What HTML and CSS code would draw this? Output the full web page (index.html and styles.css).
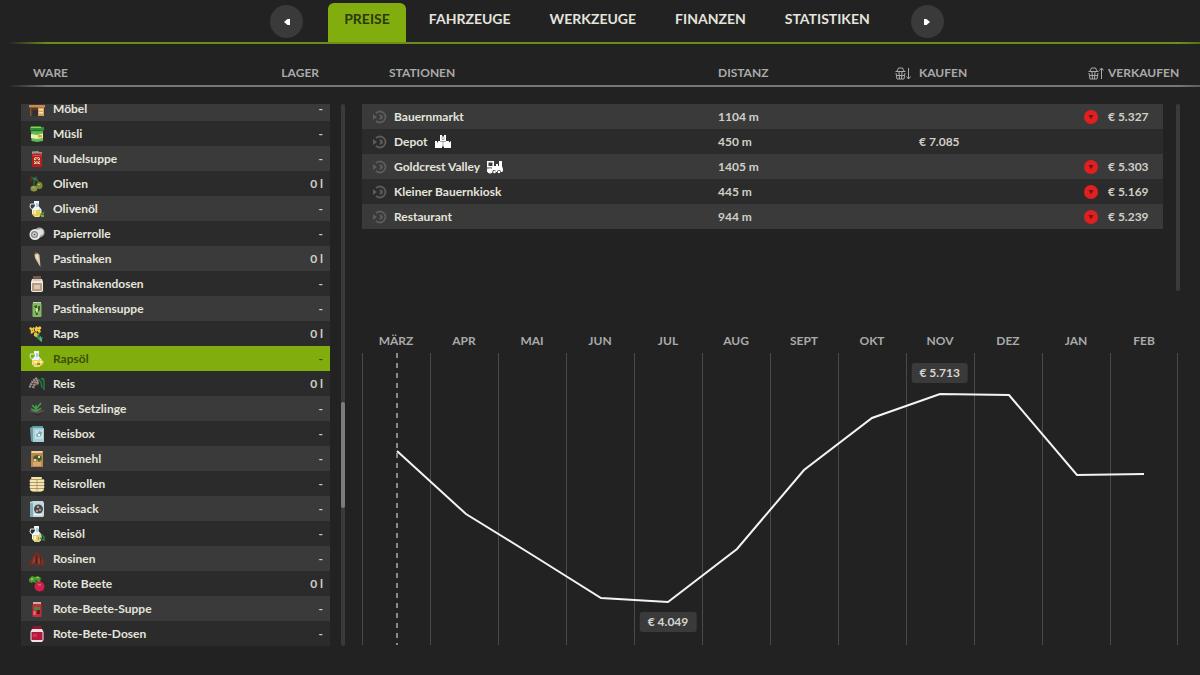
FILE: index.html
```html
<!DOCTYPE html>
<html lang="de">
<head>
    <meta charset="utf-8">
    <title>Preise</title>
    <link rel="stylesheet" href="styles.css">
</head>
<body>
    <svg class="sprite" aria-hidden="true">
        <symbol id="desk" viewBox="0 0 16 16">
            <path fill="#c98a50" d="M0 4h16v2.500H0z"/><path fill="#8b552b" d="M1 6.500h1.500V15H1zM13.500 6.500H15V15h-1.500z"/>
            <path fill="#5d3a20" d="M2.500 7H9v6H2.500z"/><path fill="#d9a066" d="M9 6.500h6V15H9z"/><path fill="#fbe3b8" d="M10 8h4v1.500h-4zM10 11h4v1.500h-4z"/>
            <path fill="#303030" d="M3.500 9H9v6H3.500z"/>
        </symbol>
        <symbol id="muesli" viewBox="0 0 16 16">
            <path fill="#2f8f3a" d="M1 1h14v3.500H1z"/><path fill="#7ed957" d="M2 .5h10v1.500H2z"/><path fill="#5fbb50" d="M2 4.500h12V15l-6 1-5.500-1z"/>
            <path fill="#f0edb0" d="M2 8l6 1 6-1.500V12l-6 1-6-1z"/><path fill="#d3a84c" d="M9 9h4v2.500H9z"/><path fill="#1f6a2b" d="M1.500 4.200h12v1h-12z"/>
        </symbol>
        <symbol id="noodle" viewBox="0 0 16 16">
            <path fill="#9a9a9a" d="M3 .5l6-.5 1 1 3 .3V4H3z"/><rect x="3" y="2.500" width="10" height="13.500" rx="1.500" fill="#bb1d20"/>
            <path fill="#e9c9a0" d="M5 6h6v7H5z"/><path stroke="#8e2d1b" d="M5 6l6 6M11 6l-6 6M8 6v7M5 9.500h6" stroke-width=".8"/><path fill="#e84a45" d="M4 4h8v1H4z"/>
        </symbol>
        <symbol id="olive" viewBox="0 0 16 16">
            <path stroke="#7b2a25" d="M2 0v6M2 1l5 1" fill="none"/><path fill="#1f7a50" d="M3 1l2 1 3-2-1 2 2 1-3 2-2-1z"/>
            <ellipse cx="5" cy="12.500" rx="3.500" ry="3" fill="#8a9642"/><ellipse cx="10.500" cy="9.500" rx="3" ry="3.500" fill="#7d8a37"/>
            <path fill="#b6bd68" d="M3.500 11h2v1h-2zM9 8h2v1H9z"/><path stroke="#4c7a30" d="M5 9V5M10 6L7 4" fill="none"/>
        </symbol>
        <symbol id="bottle" viewBox="0 0 16 16">
            <path fill="#eef6fa" d="M5 0h5v2L9.500 5l3 3.500v5L10 16H6l-3-3V8l3-3L5 2z"/><path fill="#a9cfe2" d="M7 2h2v4H7zM10 7l1.500 2v2H10z"/>
            <path fill="none" stroke="#dfeef5" d="M5 3H1.500L1 6l2 2.500"/>
        </symbol>
        <symbol id="oliveoil" viewBox="0 0 16 16">
            <use href="#bottle"/><path fill="#e8cf4b" d="M4 9h7v5.500l-1.500 1h-4L4 14z"/><path fill="#f8efa0" d="M5 9h2v4H5z"/>
            <path fill="#5d8c25" d="M11 12.500l4.500-2-1 3.500-3 1z"/><path fill="#87a83a" d="M12 14h3v2h-3z"/>
        </symbol>
        <symbol id="paper" viewBox="0 0 16 16">
            <circle cx="10.500" cy="6.500" r="5" fill="#a9a9a9"/><circle cx="11.500" cy="6" r="3" fill="#dedede"/><circle cx="6" cy="8.500" r="5.500" fill="#e6e6e6"/>
            <circle cx="5.500" cy="8.500" r="3.500" fill="#858585"/><circle cx="5.500" cy="8.500" r="2.200" fill="#cfcfcf"/><circle cx="5.500" cy="8.500" r=".8" fill="#444"/>
        </symbol>
        <symbol id="parsnip" viewBox="0 0 16 16">
            <path fill="#d8c2a2" d="M5.500 3l3-1 2 2 .5 6 .5 6-2-3L6 7z"/><path fill="#f3e5cd" d="M6.500 4h2l1.500 7-2.500-4z"/><path fill="#72633f" d="M6 1h1.500v2H6z"/>
        </symbol>
        <symbol id="parsnipjar" viewBox="0 0 16 16">
            <path fill="#765b49" d="M4 0h8v3H4z"/><path fill="#efe9df" d="M3 3h10l1 3v9l-1.500 1h-9L2 15V6z"/><path fill="#b89b82" d="M3 7h10v8H3z"/><path fill="#d8c8b5" d="M5 9h6v4H5z"/><path fill="#b5a79a" d="M4 3.500h8v1H4z"/>
        </symbol>
        <symbol id="parsnipsoup" viewBox="0 0 16 16">
            <path fill="#ccd7bd" d="M4 1h8v2H4z"/><rect x="3.500" y="2" width="9" height="14" rx="1" fill="#86b860"/><path fill="#345e2c" d="M5 5l3-1v3H6zM9 5h2v4l-2 2zM6 10h2l1 4H7z"/><path fill="#d8e4b0" d="M7 7l2 1-1 4-1-1z"/>
        </symbol>
        <symbol id="canola" viewBox="0 0 16 16">
            <path fill="none" stroke="#3f9957" stroke-width="1.500" d="M5 9l4 3 2 2M10 7l-1 4"/><path fill="#efc43f" d="M0 2l2-1 1 1.500L4.500 1 6 2 5 4l1 2-2 .5L3 8 1.500 7 2 5z"/>
            <path fill="#f3cc4a" d="M6 2l1.500-2L9 1.500 11 0l1.500 2L11 4l1 2-2 1-1.500-2L7 6 6 4.500z"/><path fill="#a87c1c" d="M3 4h1v1H3zM8.500 3h1v1h-1z"/>
            <path fill="#e5c13a" d="M5 7l2-1 2 2-1 3-3-1z"/><path fill="#49b877" d="M10 11l2-1v2l2-1-1 2v3l-2-1z"/>
        </symbol>
        <symbol id="canolaoil" viewBox="0 0 16 16">
            <use href="#bottle"/><path fill="#ecd463" d="M3 9h10l2 2-2 3-4 2-5-1z"/><path fill="#fff3a5" d="M5 10h3v2H5zM11 10h2v2h-2z"/><path fill="#a48a24" d="M8 12h3v2H8z"/>
        </symbol>
        <symbol id="rice" viewBox="0 0 16 16">
            <path fill="none" stroke="#287a43" stroke-width="1.500" d="M9 3l3 3 1 6M12 2l3 3v9M14 2l1 3"/>
            <path fill="none" stroke="#a58c84" stroke-width="2.500" stroke-dasharray="2 .6" d="M8 2L4 5l-4 7M9 4L6 7l-2 5M9 6L8 9"/>
        </symbol>
        <symbol id="seedling" viewBox="0 0 16 16">
            <path fill="#5b4b4a" d="M0 11l7-4 9 3-7 5z"/><path fill="#2e2a2a" d="M0 11l9 4 7-5-7 3z"/><path fill="none" stroke="#3fa34a" stroke-width="1.500" d="M7 11V4M7 8L3 4M7 8l5-6M8 10l4-3M6 10L2 8"/>
        </symbol>
        <symbol id="ricebox" viewBox="0 0 16 16">
            <path fill="#5b9fa9" d="M1 2l3-2h10v2l-9 1z"/><path fill="#a5cfd6" d="M4 2h11v14H4z"/><path fill="#6e9ca5" d="M1 2h3v14l-2-1z"/><path fill="#c4e2e6" d="M6 4h8v9H6z"/><path fill="#7fa6aa" d="M7 10l1-3 1 1 1-3 3 1-1 4-3 1z"/><path fill="#eff8f8" d="M9 8h2v2H9z"/>
        </symbol>
        <symbol id="flour" viewBox="0 0 16 16">
            <path fill="#bd8550" d="M2 1h12v15H2z"/><path fill="#f0d19a" d="M2 0h12l-1 2H3z"/><path fill="#d9a871" d="M4 11h8v4H4z"/><path fill="#3c6229" d="M4 6l3-2 5 1 1 3-3 3-2-3-3 2z"/><path fill="#e9d9a5" d="M5 8h2v2H5zM9 5h2v2H9z"/>
        </symbol>
        <symbol id="rolls" viewBox="0 0 16 16">
            <path fill="#b49d63" d="M1 3h14v11l-3 2H4l-3-2z"/>
            <path fill="none" stroke="#f3e5b6" stroke-width="2" stroke-linecap="round" d="M3 2h9M1.500 5h13M1.500 8h13M1.500 11h13M2.500 14h11"/><path stroke="#8d7b4c" d="M8 4v11" stroke-width=".6"/>
        </symbol>
        <symbol id="ricesack" viewBox="0 0 16 16">
            <path fill="#c0dbe2" d="M1 1l3-1h10l1 2v13l-1 1H1z"/><path fill="#82adb8" d="M1 2h3v14H1z"/><circle cx="9.500" cy="8" r="4.500" fill="#4d4546"/><path fill="#b59b91" d="M8 5h2v2H8zM10 8h2v2h-2zM7 9h2v2H7z"/><path fill="#eff8fa" d="M5 13h8v1H5z"/>
        </symbol>
        <symbol id="riceoil" viewBox="0 0 16 16">
            <use href="#bottle"/><path fill="#e3cf73" d="M4 9h8v5.500L9 16H6l-2-2z"/><path fill="#fbf3bf" d="M5 10h2v4H5z"/><path fill="#a3995b" d="M9 11h1v3H9z"/><path fill="none" stroke="#2f8141" stroke-width="1.500" d="M12 8l3 3v4M11 12l3 2"/>
        </symbol>
        <symbol id="raisin" viewBox="0 0 16 16">
            <path fill="#6d2c24" d="M5 3l3-3 2 3 3 2 3 6-1 4-4-1-3 1-4-1-4 1 1-5z"/><path fill="#8d4236" d="M4 8l2-3v6l-3 2zM9 6l2 2v5H9zM12 8l2 3v2z"/><path fill="#43201c" d="M7 5h1v8H7zM11 6h1v7z"/>
        </symbol>
        <symbol id="beet" viewBox="0 0 16 16">
            <path fill="#4f9c2e" d="M0 3l3-3 3 1 3-1 3 2-1 4-4 1-3-1-2 1-2-2z"/><path fill="#8acb4d" d="M2 2h2v2H2zM7 1h3v1H7z"/><path fill="#1f6b2f" d="M6 4h2l1 4H7z"/>
            <circle cx="10.500" cy="10.500" r="5" fill="#d11f4e"/><path fill="#f0567a" d="M9 8h3v1.500H9z"/><path stroke="#a51238" d="M13 14l2 2"/>
        </symbol>
        <symbol id="beetsoup" viewBox="0 0 16 16">
            <path fill="#dba7a1" d="M4 1h8v3H4z"/><rect x="3.500" y="3" width="9" height="13" rx="1" fill="#bd2e3f"/><path fill="#4d8a2c" d="M5 6h6v3H5z"/><path fill="#f36e7f" d="M4.500 10h2v4h-2z"/><path fill="#6e1424" d="M8 9h3v4H8z"/>
        </symbol>
        <symbol id="beetjar" viewBox="0 0 16 16">
            <path fill="#8c1733" d="M4 0h8l1 3H3z"/><path fill="#f4dfe2" d="M3 3h10l1.500 3v8L13 16H3l-1.500-2V6z"/><path fill="#b5163c" d="M2.500 6h11v8h-11z"/><path fill="#d02f56" d="M4 8h4v3H4z"/>
        </symbol>
        <symbol id="target" viewBox="0 0 14 14">
            <path fill="none" stroke="currentColor" stroke-width="1.800" d="M3 3.200a5.500 5.500 0 1 1 0 7.600"/>
            <path fill="currentColor" d="M0 4l4 3-4 3zM6 4.500h1.500a2.500 2.500 0 0 1 0 5H6L7.500 7z"/>
        </symbol>
        <symbol id="depot" viewBox="0 0 16 14">
            <path fill="currentColor" d="M5 0h2v1.500h2V0h2v6h3v1.500l2-1.500v7H9v-1.500H7V13H0V6h2v1.500h1V6h2z"/>
            <path fill="none" stroke="#777" stroke-width=".6" d="M8 6v6M5 6.500h6M7 1.500v3h2v-3"/>
        </symbol>
        <symbol id="train" viewBox="0 0 16 14">
            <path fill="currentColor" fill-rule="evenodd" d="M0 1h7v5h2V4h2v2h1V1h3v5l1 3v2l-1 1h-1a2 2 0 0 0-4 0H9a2 2 0 0 0-4 0H0zM1.500 2.500v3.500h4V2.500z"/>
            <path stroke="#3a3a3a" d="M0 8h5"/><circle cx="3" cy="11" r="2.500" fill="currentColor"/><circle cx="7.500" cy="12" r="1.300" fill="currentColor"/><circle cx="12" cy="12" r="1.300" fill="currentColor"/>
        </symbol>
        <symbol id="basket" viewBox="0 0 11 13">
            <path fill="none" stroke="currentColor" d="M.5 4.500h10M1 6l1 6h7l1-6M2 4l1.500-3h4L9 4M4 5l.5 7M7 5l-.5 7M1.500 8.500h8"/>
        </symbol>
        <symbol id="arrow" viewBox="0 0 5 13">
            <path fill="none" stroke="currentColor" d="M2.500 1v11M.5 9.500l2 2.500 2-2.500"/>
        </symbol>
        <symbol id="drop" viewBox="0 0 14 14">
            <circle cx="7" cy="7" r="7" fill="#e02020"/><path fill="#6d1515" d="M4.500 5h5L7 9.500z"/>
        </symbol>
    </svg>

    <header class="topbar">
        <button class="arrow-btn" type="button" aria-label="Zurück"><svg viewBox="0 0 6 6"><path fill="#fff" d="M0 3l3.500-3H6v6H3.500z"/></svg></button>
        <nav class="tabs">
            <button class="tab active" type="button">PREISE</button>
            <button class="tab" type="button">FAHRZEUGE</button>
            <button class="tab" type="button">WERKZEUGE</button>
            <button class="tab" type="button">FINANZEN</button>
            <button class="tab" type="button">STATISTIKEN</button>
        </nav>
        <button class="arrow-btn" type="button" aria-label="Weiter"><svg viewBox="0 0 6 6"><path fill="#fff" d="M6 3L2.500 0H0v6h2.500z"/></svg></button>
    </header>

    <main class="content">
        <section class="goods-panel">
            <table class="goods">
                <thead>
                    <tr><th>WARE</th><th>LAGER</th></tr>
                </thead>
                <tbody>
                    <tr><td><svg class="icon"><use href="#desk"/></svg>Möbel</td><td>-</td></tr>
                    <tr><td><svg class="icon"><use href="#muesli"/></svg>Müsli</td><td>-</td></tr>
                    <tr><td><svg class="icon"><use href="#noodle"/></svg>Nudelsuppe</td><td>-</td></tr>
                    <tr><td><svg class="icon"><use href="#olive"/></svg>Oliven</td><td>0 l</td></tr>
                    <tr><td><svg class="icon"><use href="#oliveoil"/></svg>Olivenöl</td><td>-</td></tr>
                    <tr><td><svg class="icon"><use href="#paper"/></svg>Papierrolle</td><td>-</td></tr>
                    <tr><td><svg class="icon"><use href="#parsnip"/></svg>Pastinaken</td><td>0 l</td></tr>
                    <tr><td><svg class="icon"><use href="#parsnipjar"/></svg>Pastinakendosen</td><td>-</td></tr>
                    <tr><td><svg class="icon"><use href="#parsnipsoup"/></svg>Pastinakensuppe</td><td>-</td></tr>
                    <tr><td><svg class="icon"><use href="#canola"/></svg>Raps</td><td>0 l</td></tr>
                    <tr class="selected"><td><svg class="icon"><use href="#canolaoil"/></svg>Rapsöl</td><td>-</td></tr>
                    <tr><td><svg class="icon"><use href="#rice"/></svg>Reis</td><td>0 l</td></tr>
                    <tr><td><svg class="icon"><use href="#seedling"/></svg>Reis Setzlinge</td><td>-</td></tr>
                    <tr><td><svg class="icon"><use href="#ricebox"/></svg>Reisbox</td><td>-</td></tr>
                    <tr><td><svg class="icon"><use href="#flour"/></svg>Reismehl</td><td>-</td></tr>
                    <tr><td><svg class="icon"><use href="#rolls"/></svg>Reisrollen</td><td>-</td></tr>
                    <tr><td><svg class="icon"><use href="#ricesack"/></svg>Reissack</td><td>-</td></tr>
                    <tr><td><svg class="icon"><use href="#riceoil"/></svg>Reisöl</td><td>-</td></tr>
                    <tr><td><svg class="icon"><use href="#raisin"/></svg>Rosinen</td><td>-</td></tr>
                    <tr><td><svg class="icon"><use href="#beet"/></svg>Rote Beete</td><td>0 l</td></tr>
                    <tr><td><svg class="icon"><use href="#beetsoup"/></svg>Rote-Beete-Suppe</td><td>-</td></tr>
                    <tr><td><svg class="icon"><use href="#beetjar"/></svg>Rote-Bete-Dosen</td><td>-</td></tr>
                </tbody>
            </table>
            <div class="scrollbar"><div class="thumb"></div></div>
        </section>

        <section class="price-panel">
            <div class="stations-wrap">
                <table class="stations">
                    <thead>
                        <tr>
                            <th>STATIONEN</th>
                            <th>DISTANZ</th>
                            <th><svg class="basket"><use href="#basket"/></svg><svg class="dir"><use href="#arrow"/></svg><span class="buy-label">KAUFEN</span></th>
                            <th><svg class="basket"><use href="#basket"/></svg><svg class="dir up"><use href="#arrow"/></svg><span>VERKAUFEN</span></th>
                        </tr>
                    </thead>
                    <tbody>
                        <tr><td><svg class="target"><use href="#target"/></svg>Bauernmarkt</td><td>1104 m</td><td></td><td><svg class="drop"><use href="#drop"/></svg>€ 5.327</td></tr>
                        <tr><td><svg class="target"><use href="#target"/></svg>Depot<svg class="kind"><use href="#depot"/></svg></td><td>450 m</td><td>€ 7.085</td><td></td></tr>
                        <tr><td><svg class="target"><use href="#target"/></svg>Goldcrest Valley<svg class="kind"><use href="#train"/></svg></td><td>1405 m</td><td></td><td><svg class="drop"><use href="#drop"/></svg>€ 5.303</td></tr>
                        <tr><td><svg class="target"><use href="#target"/></svg>Kleiner Bauernkiosk</td><td>445 m</td><td></td><td><svg class="drop"><use href="#drop"/></svg>€ 5.169</td></tr>
                        <tr><td><svg class="target"><use href="#target"/></svg>Restaurant</td><td>944 m</td><td></td><td><svg class="drop"><use href="#drop"/></svg>€ 5.239</td></tr>
                    </tbody>
                </table>
                <div class="scrollbar"></div>
            </div>

            <div class="chart">
                <div class="months">
                    <span>MÄRZ</span><span>APR</span><span>MAI</span><span>JUN</span><span>JUL</span><span>AUG</span>
                    <span>SEPT</span><span>OKT</span><span>NOV</span><span>DEZ</span><span>JAN</span><span>FEB</span>
                </div>
                <div class="plot">
                    <svg viewBox="0 0 816 292" preserveAspectRatio="none">
                        <path class="grid-line" d="M.5 0v292M68.500 0v292M136.500 0v292M204.500 0v292M272.500 0v292M340.500 0v292M408.500 0v292M476.500 0v292M544.500 0v292M612.500 0v292M680.500 0v292M748.500 0v292M815.500 0v292"/>
                        <path class="today" d="M35 0v292"/>
                        <polyline class="curve" points="35,98 104,161 172,203 239,245 306,249 375,196 442,117 510,65 578,41 647,42 715,122 782,121"/>
                    </svg>
                    <span class="badge" style="left: 70.8%; top: 3.400%">€ 5.713</span>
                    <span class="badge" style="left: 37.500%; top: 88.700%">€ 4.049</span>
                </div>
            </div>
        </section>
    </main>
</body>
</html>
```
FILE: styles.css
```css
* { box-sizing: border-box; }
body { margin: 0; height: 100vh; display: flex; flex-direction: column; background: #222; color: #e4e4dc; font: bold 12px/16px Lato, "Open Sans", sans-serif; }
svg { display: block; flex: none; }
button { border: 0; padding: 0; font: inherit; color: inherit; cursor: pointer; }
.sprite { position: absolute; width: 0; height: 0; }

/* top navigation */
.topbar { display: flex; justify-content: center; align-items: flex-end; gap: 25px; height: 44px; padding: 0 0 2px 14px; background: linear-gradient(90deg, transparent, #6c8f1c 40px, #6c8f1c calc(100% - 30px), #4d6618) 8px 100% / 100% 2px no-repeat; }
.tabs { display: flex; gap: 7px; }
.tab { height: 39px; padding: 0 16px 7px; background: none; border-radius: 6px 6px 0 0; font-size: 14px; }
.tab.active { background: #82ad0f; color: #2c3a0a; }
.arrow-btn { display: flex; align-items: center; justify-content: center; width: 33px; height: 33px; margin-bottom: 4px; border-radius: 50%; background: #3a3a3a; }
.arrow-btn svg { width: 6px; height: 6px; }

.content { flex: 1; min-height: 0; display: grid; grid-template-columns: 324fr 818fr; gap: 17px; padding: 0 20px 29px 21px; background: linear-gradient(90deg, transparent, #777 40px, #777 calc(100% - 30px), #555) 8px 41px / 100% 2px no-repeat; }

/* tables */
table { display: flex; flex-direction: column; flex: 1; min-height: 0; }
thead { display: block; height: 60px; padding-top: 21px; color: #aaa; font-size: 12px; }
tr { display: grid; flex: none; }
th, td { display: flex; align-items: center; padding: 0; text-align: left; white-space: nowrap; }
tbody tr { height: 25px; background: #2b2b2b; }
tbody tr:nth-child(odd) { background: #3a3a3a; }
td:not(:first-child) { color: #cfcfc8; }

.goods-panel { display: flex; gap: 11px; min-height: 0; }
.goods tr { grid-template-columns: 1fr auto; }
.goods th:first-child { padding-left: 12px; }
.goods th:last-child { padding-right: 11px; }
.goods tbody { flex: 1; min-height: 0; overflow: hidden; display: flex; flex-direction: column; justify-content: flex-end; }
.goods td:first-child { gap: 8px; padding-left: 8px; }
.goods td:last-child { padding-right: 7px; }
.goods tbody .selected { background: #82ad0f; }
.goods .selected td { color: #3b4d0a; }
.icon { width: 16px; height: 16px; }

.scrollbar { display: flex; flex-direction: column; width: 4px; margin-top: 60px; border-radius: 2px; background: #3a3a3a; }
.scrollbar:has(.thumb)::before { content: ""; flex: 297; }
.scrollbar:has(.thumb)::after { content: ""; flex: 138; }
.thumb { flex: 106; border-radius: 2px; background: #7c7c7c; }

.price-panel { display: flex; flex-direction: column; min-height: 0; }
.stations-wrap { display: flex; gap: 13px; min-height: 247px; }
.stations tr { grid-template-columns: 356fr 177fr 189fr 79px; }
.stations th:first-child { padding-left: 27px; }
.stations td:first-child { padding-left: 11px; }
.stations td:nth-child(3) { padding-left: 24px; }
.target { width: 14px; height: 14px; margin-right: 7px; color: #5c5c5c; }
.kind { width: 16px; height: 14px; margin-left: 7px; color: #fff; }
.drop { width: 14px; height: 14px; margin-right: 10px; }
.basket { width: 11px; height: 13px; }
th:last-child .basket { margin-left: 4px; }
.dir { width: 5px; height: 13px; margin-right: 4px; }
.dir.up { transform: rotate(180deg); }
.buy-label { margin-left: 4px; }

/* price history */
.chart { flex: 1; min-height: 0; display: flex; flex-direction: column; margin: 42px 2px 1px 0; }
.months { display: grid; grid-template-columns: repeat(12, 1fr); padding-bottom: 4px; color: #aaa; text-align: center; }
.plot { position: relative; flex: 1; min-height: 0; }
.plot svg { position: absolute; width: 100%; height: 100%; }
.grid-line { stroke: #4a4a4a; vector-effect: non-scaling-stroke; }
.today { stroke: #8a8a8a; stroke-width: 2; stroke-dasharray: 5 5; vector-effect: non-scaling-stroke; }
.curve { fill: none; stroke: #f4f4f4; stroke-width: 2; vector-effect: non-scaling-stroke; }
.badge { position: absolute; transform: translateX(-50%); padding: 2px 8px; border-radius: 3px; background: #3a3a3a; color: #d6d6ce; white-space: nowrap; }
```
